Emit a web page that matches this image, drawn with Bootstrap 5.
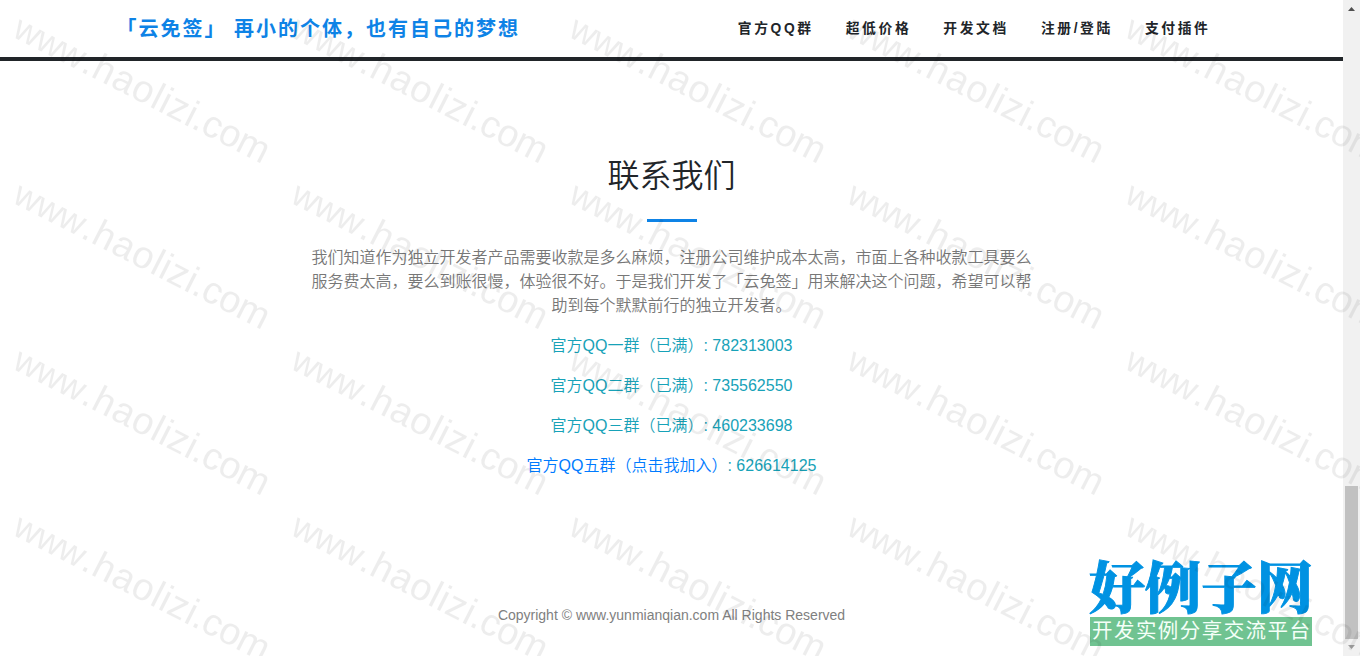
<!DOCTYPE html>
<html lang="zh-CN">
<head>
<meta charset="utf-8">
<title>云免签</title>
<link href="https://cdn.jsdelivr.net/npm/bootstrap@5.3.0/dist/css/bootstrap.min.css" rel="stylesheet">
<style>
body{font-family:"Liberation Sans","Noto Sans CJK SC",sans-serif;color:#212529;height:656px}
.page-main{width:1343px;height:656px}
.wide-box{width:1140px;padding:0 15px}
.top-nav{height:61px;border-bottom:4px solid #212529}
.brand-link{font-size:20px;letter-spacing:2px;color:#0e83e6;line-height:30px}
.top-nav .nav-link{font-size:13.8px;letter-spacing:2.6px;color:#212529;padding:0 16px;line-height:24px;white-space:nowrap}
.contact-box{width:730px;padding-top:94px}
.contact-box h2{font-size:32px;font-weight:350;line-height:42px;margin:0}
.rule{width:50px;height:3px;background:#0e83e6;margin:22px auto 24px}
.contact-box p{margin-bottom:16px;line-height:24px;font-weight:350}
.intro{color:#777}
.group{color:#17a2b8}
.group a{color:#007bff}
.copy{font-size:14px;color:#808080;line-height:20px;margin-bottom:31px}
.scroll-rail{width:17px;background:#f1f1f1}
.scroll-thumb{width:13px;height:153px;background:#c1c1c1}
.site-stamp{left:1090px;top:558px;width:222px;overflow:visible}
.wm{pointer-events:none}
</style>
</head>
<body class="d-flex overflow-hidden bg-white">
<div class="page-main d-flex flex-column flex-shrink-0">
  <nav class="top-nav d-flex justify-content-center">
    <div class="wide-box d-flex align-items-center justify-content-between">
      <a class="brand-link fw-bold text-decoration-none text-nowrap" href="#">「云免签」 再小的个体，也有自己的梦想</a>
      <div class="nav flex-nowrap fw-bold">
        <a class="nav-link" href="#">官方QQ群</a>
        <a class="nav-link" href="#">超低价格</a>
        <a class="nav-link" href="#">开发文档</a>
        <a class="nav-link" href="#">注册/登陆</a>
        <a class="nav-link" href="#">支付插件</a>
      </div>
    </div>
  </nav>
  <main class="contact-box mx-auto text-center flex-grow-1">
    <h2>联系我们</h2>
    <div class="rule"></div>
    <p class="intro">我们知道作为独立开发者产品需要收款是多么麻烦，注册公司维护成本太高，市面上各种收款工具要么<br>服务费太高，要么到账很慢，体验很不好。于是我们开发了「云免签」用来解决这个问题，希望可以帮<br>助到每个默默前行的独立开发者。</p>
    <p class="group">官方QQ一群（已满）: 782313003</p>
    <p class="group">官方QQ二群（已满）: 735562550</p>
    <p class="group">官方QQ三群（已满）: 460233698</p>
    <p class="group"><a class="text-decoration-none" href="#">官方QQ五群（点击我加入）</a>: 626614125</p>
  </main>
  <footer class="copy text-center">Copyright © www.yunmianqian.com All Rights Reserved</footer>
</div>
<div class="scroll-rail d-flex flex-column align-items-center justify-content-between flex-shrink-0">
  <svg width="17" height="17"><path d="M5 11h7L8.5 7z" fill="#505050"/></svg>
  <div class="mt-auto scroll-thumb"></div>
  <svg width="17" height="17"><path d="M5 6h7l-3.5 4z" fill="#a3a3a3"/></svg>
</div>
<svg class="site-stamp position-absolute" width="222" height="90">
  <text x="-1" y="50" font-family="Noto Serif CJK SC,Noto Sans CJK SC,serif" font-size="56" font-weight="900" fill="#0092e2" stroke="#0092e2" stroke-width=".9" textLength="224" lengthAdjust="spacingAndGlyphs">好例子网</text>
  <rect y="59" width="222" height="29" fill="#70c391"/>
  <text x="2" y="80" font-family="Noto Sans CJK SC,sans-serif" font-size="20.5" fill="#f4fff8" textLength="218">开发实例分享交流平台</text>
</svg>
<svg class="wm position-absolute top-0 start-0" width="1360" height="656">
  <defs>
    <pattern id="mark" width="278" height="166" patternUnits="userSpaceOnUse">
      <g transform="translate(11 36) rotate(27)" font-family="Liberation Sans,sans-serif" font-size="38" opacity=".07">
        <text><tspan x="0" font-size="35.5" textLength="76">www</tspan><tspan x="77" textLength="124">.haolizi</tspan><tspan x="201" textLength="81">.com</tspan></text>
      </g>
    </pattern>
  </defs>
  <rect width="1360" height="656" fill="url(#mark)"/>
</svg>
<script src="https://cdn.jsdelivr.net/npm/bootstrap@5.3.0/dist/js/bootstrap.bundle.min.js"></script>
</body>
</html>
